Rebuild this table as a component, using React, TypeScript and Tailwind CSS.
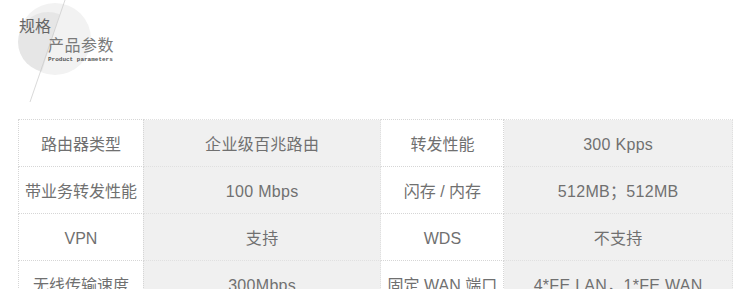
import React from 'react';

const rows: [string, string, string, string][] = [
  ['路由器类型', '企业级百兆路由', '转发性能', '300 Kpps'],
  ['带业务转发性能', '100 Mbps', '闪存 / 内存', '512MB；512MB'],
  ['VPN', '支持', 'WDS', '不支持'],
  ['无线传输速度', '300Mbps', '固定 WAN 端口', '4*FE LAN，1*FE WAN'],
];

const font = { fontFamily: '"Liberation Sans", "Noto Sans CJK SC", sans-serif' };

export default function App() {
  return (
    <div className="w-[750px] h-[289px] overflow-hidden bg-white text-[#666]" style={font}>
      {/* Section title */}
      <div className="relative h-[119px]">
        <svg className="absolute left-0 top-0" width="120" height="110" viewBox="0 0 120 110">
          <defs>
            <clipPath id="leftSide">
              <polygon points="0,0 64,0 30,110 0,110" />
            </clipPath>
          </defs>
          <circle cx="55" cy="39" r="36" fill="#f2f2f2" />
          <circle cx="48" cy="42" r="30" fill="#e6e6e6" clipPath="url(#leftSide)" />
          <line x1="65" y1="0" x2="30" y2="102" stroke="#c8c8c8" strokeWidth="0.7" />
        </svg>
        <div className="relative pl-[19px] pt-[17px]">
          <div className="text-[16px] leading-[20px] text-[#666]">规格</div>
          <div className="pl-[29px]">
            <div className="text-[16px] leading-[18px] text-[#7a7a7a] tracking-[0.5px]">产品参数</div>
            <div
              className="text-[6px] leading-[7px] text-[#555] font-bold mt-[1px]"
              style={{ fontFamily: '"Liberation Mono", monospace' }}
            >
              Product parameters
            </div>
          </div>
        </div>
      </div>

      {/* Spec table */}
      <table className="ml-[18px] w-[715px] border-collapse text-[16px] text-[#707070]">
        <colgroup>
          <col className="w-[125px]" />
          <col className="w-[238px]" />
          <col className="w-[123px]" />
          <col className="w-[229px]" />
        </colgroup>
        <tbody>
          {rows.map((r, i) => (
            <tr key={i} className="h-[47px]">
              <td className="border border-dotted border-[#d6d6d6] text-center pt-[4px] px-0 pb-0">{r[0]}</td>
              <td className="border border-dotted border-[#e0e0e0] bg-[#f0f0f0] text-center pt-[4px] px-0 pb-0 tracking-[0.3px]">{r[1]}</td>
              <td className="border border-dotted border-[#d6d6d6] text-center pt-[4px] px-0 pb-0">{r[2]}</td>
              <td className="border border-dotted border-[#e0e0e0] bg-[#f0f0f0] text-center pt-[4px] px-0 pb-0 tracking-[0.3px]">{r[3]}</td>
            </tr>
          ))}
        </tbody>
      </table>
    </div>
  );
}
